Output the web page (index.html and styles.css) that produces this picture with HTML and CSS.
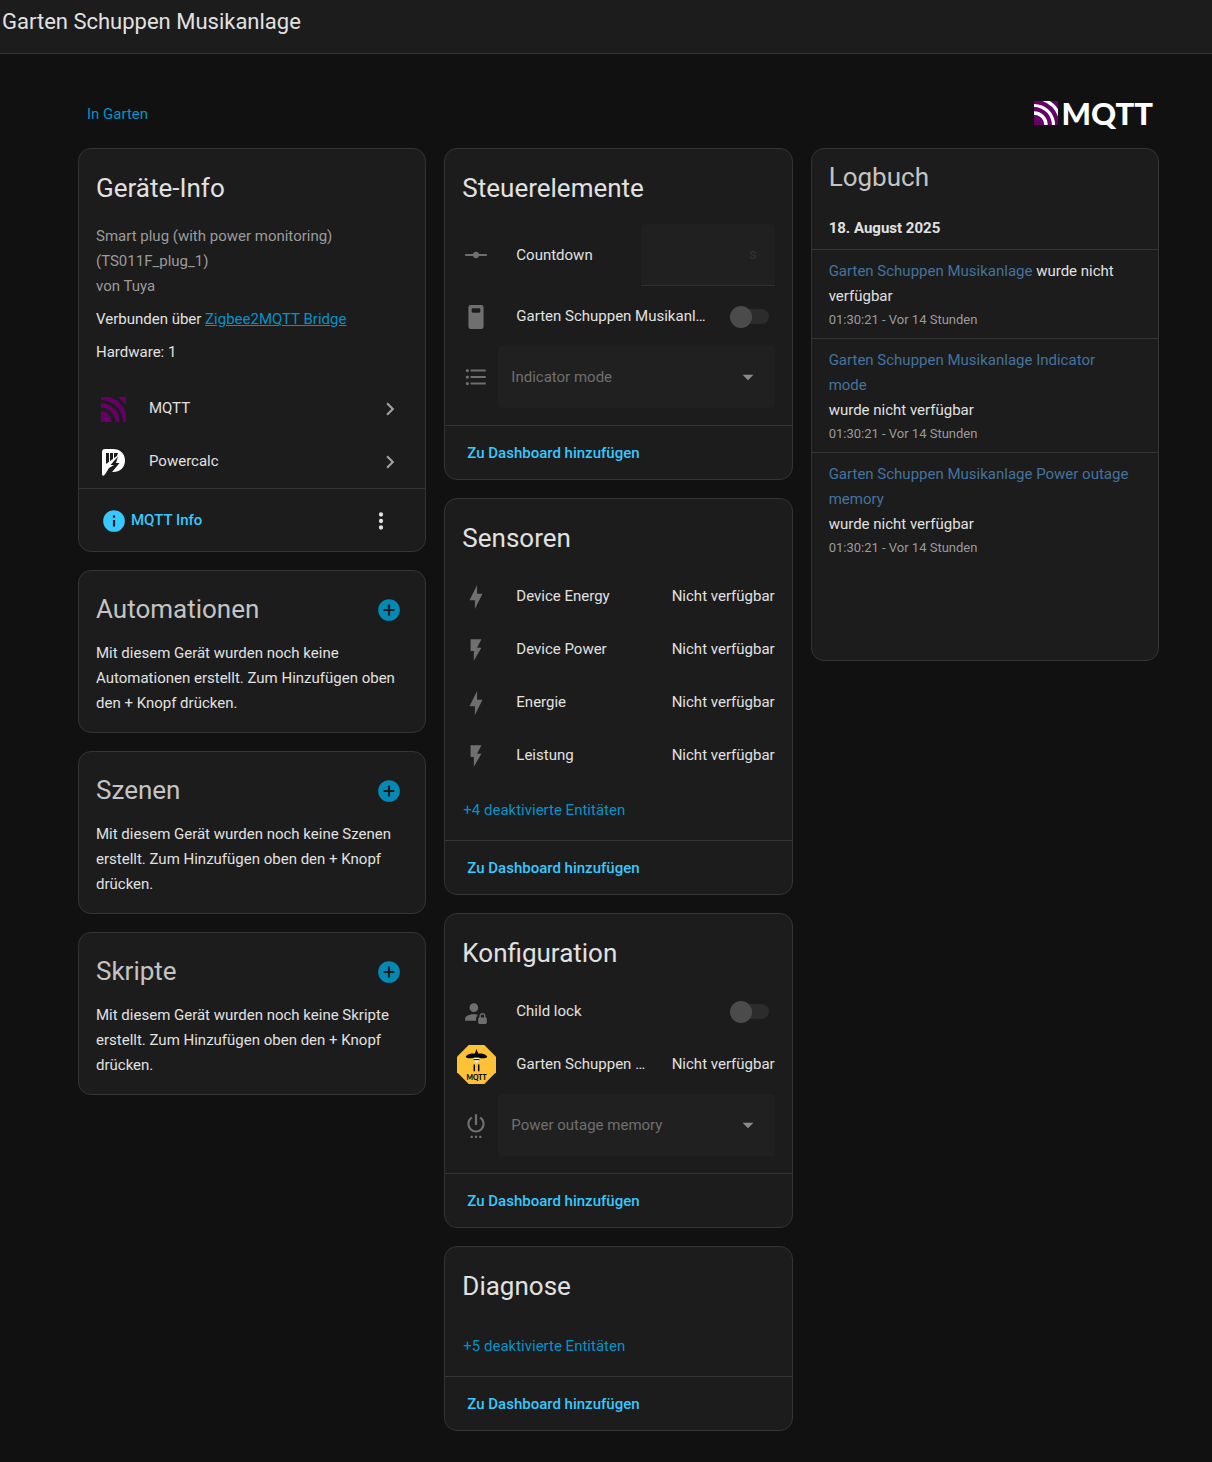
FILE: index.html
```html
<!DOCTYPE html>
<html lang="de">
<head>
<meta charset="utf-8">
<meta name="viewport" content="width=device-width, initial-scale=1">
<title>Garten Schuppen Musikanlage</title>
<link rel="stylesheet" href="styles.css">
</head>
<body>
<svg class="defs" aria-hidden="true">
  <symbol id="mqtt-mark" viewBox="0 0 25 25">
    <path d="M0 14.300A10.700 10.700 0 0 1 10.700 25H0zM0 6.300A18.700 18.700 0 0 1 18.700 25h-4.400A14.300 14.300 0 0 0 0 10.700zM0 0h8.800A26.500 26.500 0 0 1 25 16.200V25h-3A22 22 0 0 0 0 3zM16.600 0H25v8.400A30 30 0 0 0 16.600 0z"/>
  </symbol>
  <symbol id="plus-circle" viewBox="0 0 24 24"><path d="M17 13h-4v4h-2v-4H7v-2h4V7h2v4h4m-5-9A10 10 0 0 0 2 12a10 10 0 0 0 10 10 10 10 0 0 0 10-10A10 10 0 0 0 12 2z"/></symbol>
  <symbol id="chevron" viewBox="0 0 24 24"><path d="M8.590 16.580L13.170 12 8.590 7.410 10 6l6 6-6 6z"/></symbol>
  <symbol id="bolt" viewBox="0 0 24 24"><path d="M11 15H6l7-14v8h5l-7 14z"/></symbol>
  <symbol id="flash" viewBox="0 0 24 24"><path d="M7 2v11h3v9l7-12h-4l4-8z"/></symbol>
  <symbol id="caret" viewBox="0 0 24 24"><path d="M7 10l5 5 5-5z"/></symbol>
</svg>

<header class="topbar"><h1 class="topbar-title">Garten Schuppen Musikanlage</h1></header>

<main class="page">
  <div class="page-head">
    <a class="link" href="#">In Garten</a>
    <div class="brand">
      <svg class="brand-mark" viewBox="0 0 25 25" aria-hidden="true"><rect class="brand-bg" width="25" height="25"/><use href="#mqtt-mark"/></svg>
      <span class="brand-name">MQTT</span>
    </div>
  </div>

  <div class="columns">
    <div class="column">
      <section class="card">
        <h2 class="card-title">Geräte-Info</h2>
        <div class="info">
          <p class="muted">Smart plug (with power monitoring) (TS011F_plug_1)<br>von Tuya</p>
          <p>Verbunden über <a class="link underlined" href="#">Zigbee2MQTT Bridge</a></p>
          <p>Hardware: 1</p>
        </div>
        <nav class="integrations">
          <a class="integration" href="#">
            <svg class="integration-logo mqtt" viewBox="0 0 28 28" aria-hidden="true"><use href="#mqtt-mark" x="1" y="2" width="25" height="25"/></svg>
            <span>MQTT</span>
            <svg class="icon chevron" aria-hidden="true"><use href="#chevron"/></svg>
          </a>
          <a class="integration" href="#">
            <svg class="integration-logo" viewBox="0 0 28 28" aria-hidden="true">
              <path fill="#fff" d="M5 1h8c7 0 12 4.500 12 11.500S20 24 13 24h-3l-6 3.500c-1 .5-2 0-2-1.500V4c0-2 1-3 3-3z"/>
              <path fill="#1c1c1c" d="M6 5h12l-1 3-11 8z"/>
              <path fill="none" stroke="#fff" d="M9.500 4.500V14M13.500 4.500V11"/>
              <path fill="#1c1c1c" d="M18 8.500L10.500 17h3.500l-5 3-5 8 5 .5 3.500-5L19.500 15H16z"/>
            </svg>
            <span>Powercalc</span>
            <svg class="icon chevron" aria-hidden="true"><use href="#chevron"/></svg>
          </a>
        </nav>
        <div class="card-actions device-actions">
          <button class="action with-icon" type="button">
            <svg class="icon" viewBox="0 0 24 24" aria-hidden="true"><path d="M13 9h-2V7h2m0 10h-2v-6h2m-1-9A10 10 0 0 0 2 12a10 10 0 0 0 10 10 10 10 0 0 0 10-10A10 10 0 0 0 12 2z"/></svg>MQTT Info
          </button>
          <button class="icon-button menu" type="button" aria-label="Menü">
            <svg class="icon" viewBox="0 0 24 24" aria-hidden="true"><path d="M12 16a2 2 0 1 1 0 4 2 2 0 0 1 0-4m0-6a2 2 0 1 1 0 4 2 2 0 0 1 0-4m0-6a2 2 0 1 1 0 4 2 2 0 0 1 0-4z"/></svg>
          </button>
        </div>
      </section>

      <section class="card">
        <div class="card-head"><h2 class="card-title soft">Automationen</h2>
          <button class="icon-button add" type="button" aria-label="Automation hinzufügen"><svg class="icon" aria-hidden="true"><use href="#plus-circle"/></svg></button></div>
        <p class="card-text">Mit diesem Gerät wurden noch keine Automationen erstellt. Zum Hinzufügen oben den + Knopf drücken.</p>
      </section>

      <section class="card">
        <div class="card-head"><h2 class="card-title soft">Szenen</h2>
          <button class="icon-button add" type="button" aria-label="Szene hinzufügen"><svg class="icon" aria-hidden="true"><use href="#plus-circle"/></svg></button></div>
        <p class="card-text">Mit diesem Gerät wurden noch keine Szenen erstellt. Zum Hinzufügen oben den + Knopf drücken.</p>
      </section>

      <section class="card">
        <div class="card-head"><h2 class="card-title soft">Skripte</h2>
          <button class="icon-button add" type="button" aria-label="Skript hinzufügen"><svg class="icon" aria-hidden="true"><use href="#plus-circle"/></svg></button></div>
        <p class="card-text">Mit diesem Gerät wurden noch keine Skripte erstellt. Zum Hinzufügen oben den + Knopf drücken.</p>
      </section>
    </div>

    <div class="column">
      <section class="card">
        <h2 class="card-title">Steuerelemente</h2>
        <div class="entities controls">
          <div class="entity">
            <span class="badge"><svg class="icon" viewBox="0 0 24 24" aria-hidden="true"><path d="M2 11h7.170a3 3 0 0 1 5.660 0H22v2h-7.170a3 3 0 0 1-5.660 0H2z"/></svg></span>
            <label class="name" for="countdown">Countdown</label>
            <span class="number-field"><input class="number-input" id="countdown" type="text" disabled><span class="unit">s</span></span>
          </div>
          <div class="entity">
            <span class="badge"><svg class="icon" viewBox="0 0 24 24" aria-hidden="true"><path fill-rule="evenodd" d="M7 1h10a2 2 0 0 1 2 2v18a2 2 0 0 1-2 2H7a2 2 0 0 1-2-2V3a2 2 0 0 1 2-2zm2 3a1 1 0 0 0-1 1v2a1 1 0 0 0 1 1h6a1 1 0 0 0 1-1V5a1 1 0 0 0-1-1z"/></svg></span>
            <label class="name" for="switch-main">Garten Schuppen Musikanlage</label>
            <input class="toggle" id="switch-main" type="checkbox" role="switch" disabled>
          </div>
          <div class="entity select-row">
            <span class="badge"><svg class="icon" viewBox="0 0 24 24" aria-hidden="true"><path d="M7 5h14v2H7zM7 11h14v2H7zM7 17h14v2H7zM4 4.500a1.500 1.500 0 1 1 0 3 1.500 1.500 0 0 1 0-3m0 6a1.500 1.500 0 1 1 0 3 1.500 1.500 0 0 1 0-3m0 6a1.500 1.500 0 1 1 0 3 1.500 1.500 0 0 1 0-3z"/></svg></span>
            <div class="select-field">
              <select class="select" aria-label="Indicator mode" disabled><option>Indicator mode</option></select>
              <svg class="icon caret" aria-hidden="true"><use href="#caret"/></svg>
            </div>
          </div>
        </div>
        <div class="card-actions"><button class="action" type="button">Zu Dashboard hinzufügen</button></div>
      </section>

      <section class="card">
        <h2 class="card-title">Sensoren</h2>
        <div class="entities">
          <div class="entity"><span class="badge"><svg class="icon" aria-hidden="true"><use href="#bolt"/></svg></span><span class="name">Device Energy</span><span class="state">Nicht verfügbar</span></div>
          <div class="entity"><span class="badge"><svg class="icon" aria-hidden="true"><use href="#flash"/></svg></span><span class="name">Device Power</span><span class="state">Nicht verfügbar</span></div>
          <div class="entity"><span class="badge"><svg class="icon" aria-hidden="true"><use href="#bolt"/></svg></span><span class="name">Energie</span><span class="state">Nicht verfügbar</span></div>
          <div class="entity"><span class="badge"><svg class="icon" aria-hidden="true"><use href="#flash"/></svg></span><span class="name">Leistung</span><span class="state">Nicht verfügbar</span></div>
          <button class="show-more" type="button">+4 deaktivierte Entitäten</button>
        </div>
        <div class="card-actions"><button class="action" type="button">Zu Dashboard hinzufügen</button></div>
      </section>

      <section class="card">
        <h2 class="card-title">Konfiguration</h2>
        <div class="entities">
          <div class="entity">
            <span class="badge"><svg class="icon" viewBox="0 0 24 24" aria-hidden="true"><path d="M6 8a4 4 0 1 1 8 0 4 4 0 0 1-8 0m6 10.200c0-.96.5-1.860 1.200-2.460v-.24c0-.39.07-.76.18-1.120A15 15 0 0 0 10 14c-4.420 0-8 1.790-8 4v2h10zM22 18.300v3.500c0 .6-.6 1.200-1.300 1.200h-5.500c-.6 0-1.200-.6-1.200-1.300v-3.500c0-.6.6-1.200 1.200-1.200v-1.500c0-1.400 1.400-2.500 2.800-2.500s2.800 1.100 2.800 2.500V17c.6 0 1.200.6 1.200 1.300m-2.500-2.800c0-.8-.7-1.300-1.500-1.300s-1.500.5-1.500 1.300V17h3z"/></svg></span>
            <label class="name" for="switch-lock">Child lock</label>
            <input class="toggle" id="switch-lock" type="checkbox" role="switch" disabled>
          </div>
          <div class="entity">
            <span class="badge">
              <svg class="picture" viewBox="0 0 40 40" aria-hidden="true">
                <path fill="#ffc135" d="M12 0h16l12 12v16L28 40H12L0 28V12z"/>
                <path d="M20 4l1 3 1 2c4-1 8 1 9 3-1 2-5 2-9 1h-4c-4 1-8 1-9-1 1-2 5-4 9-3l1-2zM17 20h1.500v7H17zM21.500 20H23v7h-1.500z"/>
                <path fill="#fff0c0" d="M17 13h6l-1 4-2 2-2-2z"/><path d="M17 14.500h6v1h-6z"/>
                <text class="picture-text" x="20" y="36" text-anchor="middle">MQTT</text>
              </svg>
            </span>
            <span class="name">Garten Schuppen Musikanlage</span>
            <span class="state">Nicht verfügbar</span>
          </div>
          <div class="entity select-row">
            <span class="badge"><svg class="icon" viewBox="0 0 24 24" aria-hidden="true"><path d="M15 24h2v-2h-2M16.560 4.440l-1.450 1.450A6 6 0 0 1 18 11a6 6 0 0 1-12 0c0-2.170 1.160-4.060 2.880-5.120L7.440 4.440A8 8 0 0 0 4 11a8 8 0 0 0 16 0c0-2.720-1.360-5.120-3.440-6.560M13 2h-2v10h2M11 24h2v-2h-2M7 24h2v-2H7"/></svg></span>
            <div class="select-field">
              <select class="select" aria-label="Power outage memory" disabled><option>Power outage memory</option></select>
              <svg class="icon caret" aria-hidden="true"><use href="#caret"/></svg>
            </div>
          </div>
        </div>
        <div class="card-actions"><button class="action" type="button">Zu Dashboard hinzufügen</button></div>
      </section>

      <section class="card">
        <h2 class="card-title">Diagnose</h2>
        <div class="entities"><button class="show-more" type="button">+5 deaktivierte Entitäten</button></div>
        <div class="card-actions"><button class="action" type="button">Zu Dashboard hinzufügen</button></div>
      </section>
    </div>

    <div class="column">
      <section class="card">
        <h2 class="card-title soft compact">Logbuch</h2>
        <div class="log">
          <h3 class="log-date">18. August 2025</h3>
          <article class="log-entry"><a class="log-link" href="#">Garten Schuppen Musikanlage</a> wurde nicht verfügbar<div class="log-time">01:30:21 - Vor 14 Stunden</div></article>
          <article class="log-entry"><a class="log-link" href="#">Garten Schuppen Musikanlage Indicator mode</a><br>wurde nicht verfügbar<div class="log-time">01:30:21 - Vor 14 Stunden</div></article>
          <article class="log-entry"><a class="log-link" href="#">Garten Schuppen Musikanlage Power outage memory</a><br>wurde nicht verfügbar<div class="log-time">01:30:21 - Vor 14 Stunden</div></article>
        </div>
      </section>
    </div>
  </div>
</main>
</body>
</html>
```
FILE: styles.css
```css
:root {
  --bg: #111;
  --card: #1c1c1c;
  --line: #343434;
  --text: #e1e1e1;
  --muted: #9b9b9b;
  --icon: #6f6f6f;
  --primary: #0393c8;
  --accent: #37c8fd;
}

* { box-sizing: border-box; }

body {
  margin: 0;
  background: var(--bg);
  color: var(--text);
  font: 400 15px/25px Roboto, sans-serif;
}

h1, h2, h3, p { margin: 0; font-weight: 400; }

button {
  border: 0;
  padding: 0;
  background: none;
  font: inherit;
  color: inherit;
  cursor: pointer;
}

.defs { position: absolute; width: 0; height: 0; }

.icon { display: block; flex: none; width: 26px; height: 26px; fill: currentColor; }

.topbar {
  padding: 7px 2px 16px;
  background: var(--card);
  border-bottom: 1px solid var(--line);
}

.topbar-title { font-size: 22px; line-height: 30px; }

.page { padding: 32px 53px 30px 78px; }

.page-head {
  display: flex;
  align-items: center;
  justify-content: space-between;
  height: 56px;
  margin-bottom: 6px;
  padding: 0 6px 0 9px;
}

.link { color: var(--primary); text-decoration: none; }
.link.underlined { text-decoration: underline; }

.brand { display: flex; align-items: center; gap: 4px; padding-bottom: 3px; }
.brand-mark { width: 24px; height: 24px; fill: #660066; }
.brand-bg { fill: #fff; }
.brand-name { font: 900 31px/32px Lato, sans-serif; color: #fff; }

.columns {
  display: grid;
  grid-template-columns: repeat(3, minmax(0, 1fr));
  gap: 18px;
  align-items: start;
}

.column { display: grid; grid-template-columns: minmax(0, 1fr); gap: 18px; }

.card {
  background: var(--card);
  border: 1px solid var(--line);
  border-radius: 13px;
}

.card-head { display: flex; align-items: flex-end; justify-content: space-between; padding-right: 10px; }

.card-title { padding: 13px 17px 0; font-size: 26px; line-height: 53px; }
.card-head .card-title { padding-top: 12px; }
.card-title.soft { color: #c4c4c4; }
.card-title.compact { padding-top: 2px; }

.icon-button {
  display: flex;
  align-items: center;
  justify-content: center;
  width: 53px;
  height: 53px;
}

.add { color: #0489b4; width: 52px; }

.card-text { padding: 5px 17px 16px; }

.info { display: grid; gap: 8px; padding: 9px 17px 17px; }
.muted { color: var(--muted); }

.integration {
  display: flex;
  align-items: center;
  height: 53px;
  padding: 0 22px 0 21px;
  color: inherit;
  text-decoration: none;
}

.integration span { flex: 1; padding-left: 21px; }
.integration-logo { width: 28px; height: 28px; }
.mqtt { fill: #660066; }
.chevron { color: #a0a0a0; }

.card-actions {
  display: flex;
  align-items: center;
  height: 54px;
  padding: 1px 18px 0 22px;
  border-top: 1px solid var(--line);
}

.device-actions { justify-content: space-between; height: 63px; }

.action { color: var(--accent); font-weight: 500; }
.action.with-icon { display: flex; align-items: center; gap: 4px; }

.entities { padding: 5px 17px 17px 11px; }
.controls { padding-top: 9px; }
.controls .entity:first-child { height: 62px; margin-bottom: 4px; }

.entity { display: flex; align-items: center; height: 53px; }

.badge {
  display: flex;
  align-items: center;
  justify-content: center;
  flex: none;
  width: 40px;
  color: var(--icon);
}

.picture { width: 39px; height: 39px; }
.picture-text { font: 900 7px Lato, sans-serif; }

.name {
  flex: 1;
  min-width: 0;
  margin: 0 17px 0 20px;
  overflow: hidden;
  text-overflow: ellipsis;
  white-space: nowrap;
}

.number-field {
  display: flex;
  align-items: center;
  width: 134px;
  height: 62px;
  padding: 0 18px 0 12px;
  background: #202020;
  border-bottom: 1px solid #303030;
  border-radius: 4px 4px 0 0;
}

.number-input {
  flex: 1;
  min-width: 0;
  border: 0;
  background: none;
  color: inherit;
  font: inherit;
}

.unit { color: #343434; }

.toggle {
  appearance: none;
  display: flex;
  flex: none;
  align-items: center;
  width: 37px;
  height: 15px;
  margin: 0 6px 0 2px;
  border-radius: 8px;
  background: #2c2c2c;
}

.toggle::before {
  content: "";
  flex: none;
  width: 22px;
  height: 22px;
  margin-left: -2px;
  border-radius: 50%;
  background: #4b4b4b;
}

.select-row { height: 62px; margin-top: 3px; }

.select-field {
  display: grid;
  flex: 1;
  align-items: center;
  height: 62px;
  margin-left: 2px;
  background: #202020;
  border-radius: 4px;
}

.select-field > * { grid-area: 1 / 1; }

.select {
  appearance: none;
  width: 100%;
  height: 62px;
  padding: 0 40px 0 13px;
  border: 0;
  background: none;
  color: #6f6f6f;
  font: inherit;
  opacity: 1;
}

.caret { justify-self: end; margin-right: 14px; color: #8a8a8a; pointer-events: none; }

.show-more { display: block; margin: 16px 0 0 7px; color: var(--primary); }

.log { min-height: 456px; padding-top: 12px; }
.log-date { padding: 0 17px 8px; font-size: 15px; font-weight: 700; }
.log-entry { padding: 9px 25px 8px 17px; border-top: 1px solid var(--line); }
.log-link { color: #44739e; text-decoration: none; }
.log-time { color: var(--muted); font-size: 13px; line-height: 21px; }
```
